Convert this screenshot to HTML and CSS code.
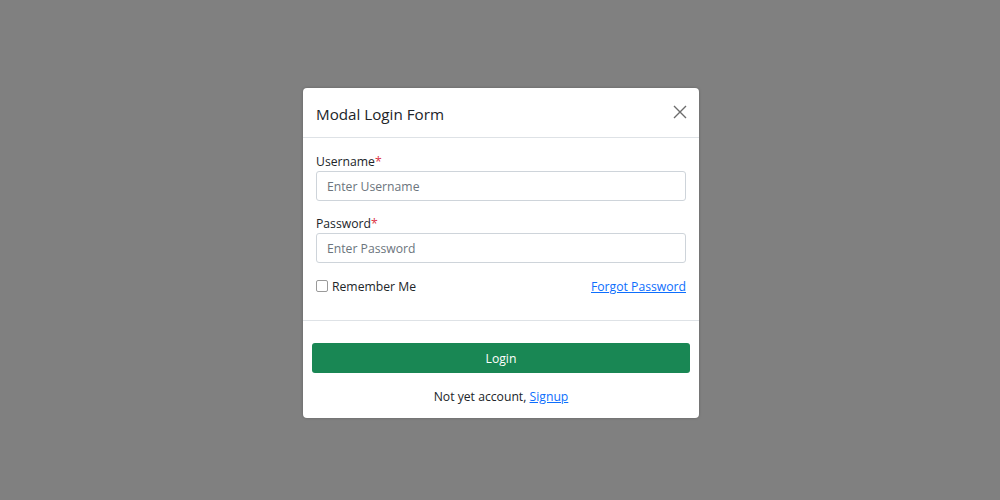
FILE: index.html
```html
<!DOCTYPE html>
<html lang="en">
<head>
<meta charset="utf-8">
<title>Modal Login Form</title>
<link rel="stylesheet" href="styles.css">
</head>
<body>
<div class="backdrop">
  <div class="modal">
    <div class="modal-header">
      <h5 class="modal-title">Modal Login Form</h5>
      <button class="btn-close" type="button" aria-label="Close">
        <svg width="14" height="14" viewBox="0 0 14 14"><path d="M1 1L13 13M13 1L1 13" stroke="#6c6c6c" stroke-width="1.4" fill="none"/></svg>
      </button>
    </div>
    <div class="modal-body">
      <div class="field">
        <label class="form-label">Username<span class="req">*</span></label>
        <input class="form-control" type="text" placeholder="Enter Username">
      </div>
      <div class="field">
        <label class="form-label">Password<span class="req">*</span></label>
        <input class="form-control" type="password" placeholder="Enter Password">
      </div>
      <div class="options">
        <label class="check"><span class="box"></span>Remember Me</label>
        <a href="#" class="link">Forgot Password</a>
      </div>
    </div>
    <div class="modal-footer">
      <button class="btn-login" type="button">Login</button>
      <p class="signup">Not yet account, <a href="#" class="link">Signup</a></p>
    </div>
  </div>
</div>
</body>
</html>
```
FILE: styles.css
```css
* { box-sizing: border-box; }
html, body { margin: 0; padding: 0; }
body {
  font-family: "Open Sans", "Noto Sans", sans-serif;
  color: #212529;
  font-size: 12.2px;
}
.backdrop {
  width: 1000px;
  height: 500px;
  background: #808080;
  display: flex;
  justify-content: center;
  padding-top: 88px;
  padding-left: 2px;
}
.modal {
  width: 396px;
  height: 330px;
  background: #fff;
  border-radius: 4px;
  box-shadow: 0 0 3px rgba(0,0,0,0.25);
  display: flex;
  flex-direction: column;
}
.modal-header {
  height: 50px;
  border-bottom: 1px solid #dee2e6;
  display: flex;
  align-items: center;
  justify-content: space-between;
  padding: 2px 12px 0 13px;
}
.modal-title {
  margin: 0;
  font-size: 15.2px;
  font-weight: 400;
}
.btn-close {
  background: none;
  border: 0;
  padding: 0;
  width: 14px;
  height: 14px;
  display: flex;
  margin-top: -3px;
}
.modal-body {
  padding: 15px 13px 0;
  height: 183px;
  border-bottom: 1px solid #dee2e6;
}
.field { margin-bottom: 14px; }
.form-label {
  display: block;
  line-height: 18px;
  margin-bottom: 0;
}
.req { color: #dc3545; }
.form-control {
  display: block;
  width: 100%;
  height: 30px;
  border: 1px solid #ced4da;
  border-radius: 3px;
  padding: 0 10px;
  font-family: inherit;
  font-size: 12.2px;
  color: #212529;
  background: #fff;
}
.form-control::placeholder { color: #6c757d; }
.options {
  display: flex;
  justify-content: space-between;
  align-items: center;
  margin-top: 8px;
  height: 18px;
}
.check {
  display: flex;
  align-items: center;
  gap: 4px;
}
.box {
  width: 12px;
  height: 12px;
  border: 1px solid #9a9a9a;
  border-radius: 2px;
  background: #fff;
}
.link {
  color: #0d6efd;
  text-decoration: underline;
}
.modal-footer {
  padding: 22px 9px 0;
  display: flex;
  flex-direction: column;
  align-items: center;
}
.btn-login {
  width: 100%;
  height: 30px;
  background: #198754;
  color: #fff;
  border: 0;
  border-radius: 3px;
  font-family: inherit;
  font-size: 12.2px;
}
.signup {
  margin: 15px 0 0;
  line-height: 18px;
}
```
